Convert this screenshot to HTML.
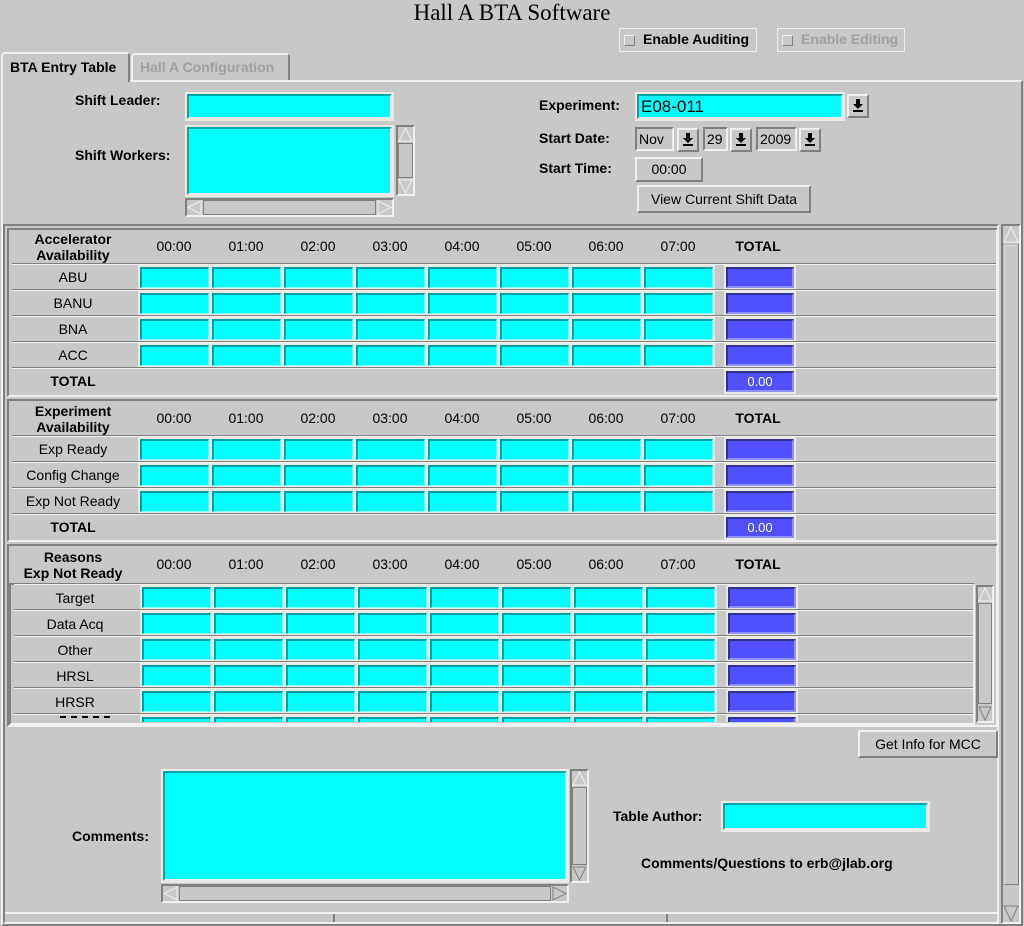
<!DOCTYPE html>
<html><head><meta charset="utf-8">
<style>
*{box-sizing:border-box;margin:0;padding:0}
body{width:1024px;height:926px;background:#c8c8c8;font-family:"Liberation Sans",sans-serif;font-size:14px;color:#000;position:relative;overflow:hidden}
.a{position:absolute}
.b{font-weight:bold}
.raised{border:2px solid;border-color:#f0f0f0 #808080 #808080 #f0f0f0;background:#c8c8c8}
.sunk{border:2px solid;border-color:#808080 #f0f0f0 #f0f0f0 #808080}
.ent{position:absolute;background:#0ff;border:2px solid;border-color:#00a8a8 #e8e8e8 #e8e8e8 #00a8a8;outline:2px solid #ece9e2}
.cy{position:absolute;background:#0ff;border:1px solid;border-color:#00a0a0 #80ffff #80ffff #00a0a0;border-width:2px 1px 1px 2px}
.bl{position:absolute;background:#5050ff;border:2px solid;border-color:#303090 #9090ff #9090ff #303090;color:#fff;text-align:center;font-size:13px;line-height:17px}
.lt{position:absolute;background:#ece9e2}
.ln{position:absolute;height:2px;border-top:1px solid #808080;border-bottom:1px solid #f0f0f0}
.c{text-align:center}
svg{position:absolute;display:block}
</style></head><body>
<div class="a" style="left:0;top:0;width:1024px;text-align:center;font-family:'Liberation Serif',serif;font-size:23px;top:0">Hall A BTA Software</div>

<div class="a" style="left:619px;top:28px;width:138px;height:24px;border:1px solid #eee"></div>
<div class="a raised" style="left:624px;top:35px;width:11px;height:11px;border-width:1px"></div>
<div class="a b" style="left:643px;top:31px">Enable Auditing</div>
<div class="a" style="left:777px;top:28px;width:128px;height:24px;border:1px solid #eee"></div>
<div class="a raised" style="left:782px;top:35px;width:11px;height:11px;border-width:1px"></div>
<div class="a b" style="left:801px;top:31px;color:#a0a0a0">Enable Editing</div>

<div class="a" style="left:1px;top:80px;width:1022px;height:846px;border-top:2px solid #f0f0f0;border-left:2px solid #f0f0f0;border-right:2px solid #808080;border-bottom:2px solid #808080"></div>
<div class="a" style="left:1px;top:52px;width:129px;height:30px;background:#c8c8c8;border:2px solid #f0f0f0;border-right-color:#808080;border-bottom:none;border-radius:4px 4px 0 0"></div>
<div class="a b" style="left:10px;top:59px">BTA Entry Table</div>
<div class="a" style="left:131px;top:53px;width:159px;height:27px;border:2px solid #f0f0f0;border-right-color:#808080;border-bottom:none;border-radius:4px 4px 0 0"></div>
<div class="a b" style="left:140px;top:59px;color:#a0a0a0">Hall A Configuration</div>

<div class="a b" style="left:75px;top:92px">Shift Leader:</div>
<div class="ent" style="left:187px;top:94px;width:205px;height:25px"></div>
<div class="a b" style="left:75px;top:147px">Shift Workers:</div>
<div class="ent" style="left:187px;top:127px;width:205px;height:68px"></div>
<div class="a sunk" style="left:396px;top:125px;width:19px;height:71px;background:#c8c8c8"></div>
<svg style="left:398px;top:127px" width="15" height="67"><path d="M7.5 1L14 14H1Z" fill="none" stroke="#f0f0f0"/><path d="M7.5 53L14 66H1Z" transform="rotate(180 7.5 59.5)" fill="none" stroke="#f0f0f0"/><rect x="0.5" y="16.5" width="14" height="34" fill="none" stroke="#808080"/></svg>
<div class="a sunk" style="left:185px;top:198px;width:209px;height:19px;background:#c8c8c8"></div>
<svg style="left:187px;top:200px" width="205" height="15"><path d="M1 7.5L14 1V14Z" fill="none" stroke="#f0f0f0"/><path d="M204 7.5L191 1V14Z" fill="none" stroke="#f0f0f0"/><rect x="16.5" y="0.5" width="172" height="14" fill="none" stroke="#808080"/></svg>

<div class="a b" style="left:539px;top:97px">Experiment:</div>
<div class="ent" style="left:637px;top:94px;width:206px;height:25px;font-size:17px;line-height:21px;padding-left:2px">E08-011</div>
<div class="a raised" style="left:847px;top:94px;width:22px;height:24px"></div>
<div class="a raised" style="left:677px;top:128px;width:22px;height:24px"></div>
<div class="a raised" style="left:730px;top:128px;width:22px;height:24px"></div>
<div class="a raised" style="left:799px;top:128px;width:22px;height:24px"></div>
<svg style="left:853px;top:99px" width="10" height="13"><path d="M3 0h4v5h3L5 10 0 5h3z M0 11h10v2H0z" fill="#000"/></svg>
<svg style="left:683px;top:133px" width="10" height="13"><path d="M3 0h4v5h3L5 10 0 5h3z M0 11h10v2H0z" fill="#000"/></svg>
<svg style="left:736px;top:133px" width="10" height="13"><path d="M3 0h4v5h3L5 10 0 5h3z M0 11h10v2H0z" fill="#000"/></svg>
<svg style="left:805px;top:133px" width="10" height="13"><path d="M3 0h4v5h3L5 10 0 5h3z M0 11h10v2H0z" fill="#000"/></svg>
<div class="a b" style="left:539px;top:130px">Start Date:</div>
<div class="a sunk" style="left:635px;top:127px;width:39px;height:24px;line-height:20px;padding-left:2px">Nov</div>
<div class="a sunk" style="left:703px;top:127px;width:25px;height:24px;line-height:20px;padding-left:2px">29</div>
<div class="a sunk" style="left:756px;top:127px;width:41px;height:24px;line-height:20px;padding-left:2px">2009</div>
<div class="a b" style="left:539px;top:160px">Start Time:</div>
<div class="a raised c" style="left:635px;top:157px;width:68px;height:25px;line-height:21px">00:00</div>
<div class="a raised c" style="left:637px;top:185px;width:174px;height:28px;line-height:24px">View Current Shift Data</div>

<div class="a sunk" style="left:3px;top:224px;width:996px;height:700px"></div>
<div class="a sunk" style="left:1001px;top:224px;width:20px;height:700px;background:#c8c8c8"></div>
<svg style="left:1003px;top:226px" width="16" height="696"><path d="M8 1L15 16H1Z" fill="none" stroke="#f0f0f0"/><path d="M8 695L15 680H1Z" fill="none" stroke="#808080"/><rect x="0.5" y="18.5" width="15" height="640" fill="none" stroke="#808080"/><path d="M1 19h14M1 19v640" stroke="#f0f0f0"/></svg>

<div class="a" style="left:7px;top:228px;width:991px;height:169px;border:2px solid;border-color:#808080 #f0f0f0 #f0f0f0 #808080"></div>
<div class="a" style="left:7px;top:399px;width:991px;height:143px;border:2px solid;border-color:#808080 #f0f0f0 #f0f0f0 #808080"></div>
<div class="a" style="left:7px;top:544px;width:991px;height:183px;border:2px solid;border-color:#808080 #f0f0f0 #f0f0f0 #808080"></div>
<div class="a" style="left:9px;top:583px;width:966px;height:142px;border:2px solid;border-color:#808080 #f0f0f0 #f0f0f0 #808080"></div>
<div class="a sunk" style="left:976px;top:585px;width:18px;height:138px;background:#c8c8c8"></div>
<svg style="left:978px;top:587px" width="14" height="134"><path d="M7 1L13 14H1Z" fill="none" stroke="#f0f0f0"/><path d="M7 133L13 120H1Z" fill="none" stroke="#808080"/><rect x="0.5" y="16.5" width="13" height="100" fill="none" stroke="#808080"/></svg>

<div class="a b c" style="left:8px;top:231px;width:130px;line-height:16px">Accelerator<br>Availability</div>
<div class="a b c" style="left:8px;top:403px;width:130px;line-height:16px">Experiment<br>Availability</div>
<div class="a b c" style="left:8px;top:549px;width:130px;line-height:16px">Reasons<br>Exp Not Ready</div>

<div id="hdr"></div>
<div class="a c" style="left:8px;top:269px;width:130px">ABU</div>
<div class="a c" style="left:8px;top:295px;width:130px">BANU</div>
<div class="a c" style="left:8px;top:321px;width:130px">BNA</div>
<div class="a c" style="left:8px;top:347px;width:130px">ACC</div>
<div class="a c b" style="left:8px;top:373px;width:130px">TOTAL</div>
<div class="a c" style="left:8px;top:441px;width:130px">Exp Ready</div>
<div class="a c" style="left:8px;top:467px;width:130px">Config Change</div>
<div class="a c" style="left:8px;top:493px;width:130px">Exp Not Ready</div>
<div class="a c b" style="left:8px;top:519px;width:130px">TOTAL</div>
<div class="a c" style="left:10px;top:590px;width:130px">Target</div>
<div class="a c" style="left:10px;top:616px;width:130px">Data Acq</div>
<div class="a c" style="left:10px;top:642px;width:130px">Other</div>
<div class="a c" style="left:10px;top:668px;width:130px">HRSL</div>
<div class="a c" style="left:10px;top:694px;width:130px">HRSR</div>
<div id="cells"></div>
<div id="cells3" class="a" style="left:0;top:0;width:1024px;height:722px;overflow:hidden"></div>
<div class="bl" style="left:726px;top:371px;width:68px;height:21px">0.00</div>
<div class="bl" style="left:726px;top:517px;width:68px;height:21px">0.00</div>

<div class="a raised c" style="left:858px;top:730px;width:140px;height:28px;line-height:24px">Get Info for MCC</div>

<div class="a b" style="left:72px;top:828px">Comments:</div>
<div class="ent" style="left:163px;top:771px;width:404px;height:110px"></div>
<div class="a sunk" style="left:570px;top:769px;width:19px;height:114px;background:#c8c8c8"></div>
<svg style="left:572px;top:771px" width="15" height="110"><path d="M7.5 1L14 14H1Z" fill="none" stroke="#f0f0f0"/><path d="M7.5 109L14 96H1Z" fill="none" stroke="#808080"/><rect x="0.5" y="16.5" width="14" height="77" fill="none" stroke="#808080"/></svg>
<div class="a sunk" style="left:161px;top:884px;width:408px;height:19px;background:#c8c8c8"></div>
<svg style="left:163px;top:886px" width="404" height="15"><path d="M1 7.5L14 1V14Z" fill="none" stroke="#f0f0f0"/><path d="M403 7.5L390 1V14Z" fill="none" stroke="#808080"/><rect x="16.5" y="0.5" width="371" height="14" fill="none" stroke="#808080"/></svg>
<div class="a b" style="left:613px;top:808px">Table Author:</div>
<div class="ent" style="left:723px;top:803px;width:205px;height:27px"></div>
<div class="a b" style="left:641px;top:855px">Comments/Questions to erb@jlab.org</div>
<div class="a" style="left:5px;top:912px;width:992px;height:10px;border-top:2px solid #f0f0f0"></div>
<div class="a" style="left:333px;top:914px;width:2px;height:8px;background:#808080"></div>
<div class="a" style="left:666px;top:914px;width:2px;height:8px;background:#808080"></div>

<script>
var h='';
var hours=['00:00','01:00','02:00','03:00','04:00','05:00','06:00','07:00'];
[238,410,556].forEach(function(y){
 hours.forEach(function(t,i){h+='<div class="a c" style="left:'+(138+72*i)+'px;top:'+y+'px;width:72px">'+t+'</div>';});
 h+='<div class="a c b" style="left:722px;top:'+y+'px;width:72px">TOTAL</div>';});
document.getElementById('hdr').innerHTML=h;
function sec(tops,tot,x0,right){
 var c='';
 tops.forEach(function(t,k){
  c+='<div class="ln" style="left:'+(x0-128)+'px;top:'+(t-1)+'px;width:'+(right-x0+128)+'px"></div>';
  if(k<tops.length-(tot?1:0)){
   c+='<div class="lt" style="left:'+(x0-2)+'px;top:'+(t+1)+'px;width:'+(72*8+1)+'px;height:25px"></div>';
   for(var i=0;i<8;i++)c+='<div class="cy" style="left:'+(x0+72*i)+'px;top:'+(t+3)+'px;width:69px;height:21px"></div>';
   c+='<div class="lt" style="left:'+(x0+584)+'px;top:'+(t+1)+'px;width:72px;height:25px"></div>';
   c+='<div class="bl" style="left:'+(x0+586)+'px;top:'+(t+3)+'px;width:68px;height:21px"></div>';
  } else {
   c+='<div class="lt" style="left:'+(x0+584)+'px;top:'+(t+1)+'px;width:72px;height:25px"></div>';
  }
 });
 return c;
}
document.getElementById('cells').innerHTML=sec([264,290,316,342,368],true,140,996)+sec([436,462,488,514],true,140,996);
document.getElementById('cells3').innerHTML=sec([584,610,636,662,688,714],false,142,973)+'<div class="a" style="left:60px;top:716px;width:50px;height:3px;border-top:2px dashed #000"></div>';
</script>
</body></html>
